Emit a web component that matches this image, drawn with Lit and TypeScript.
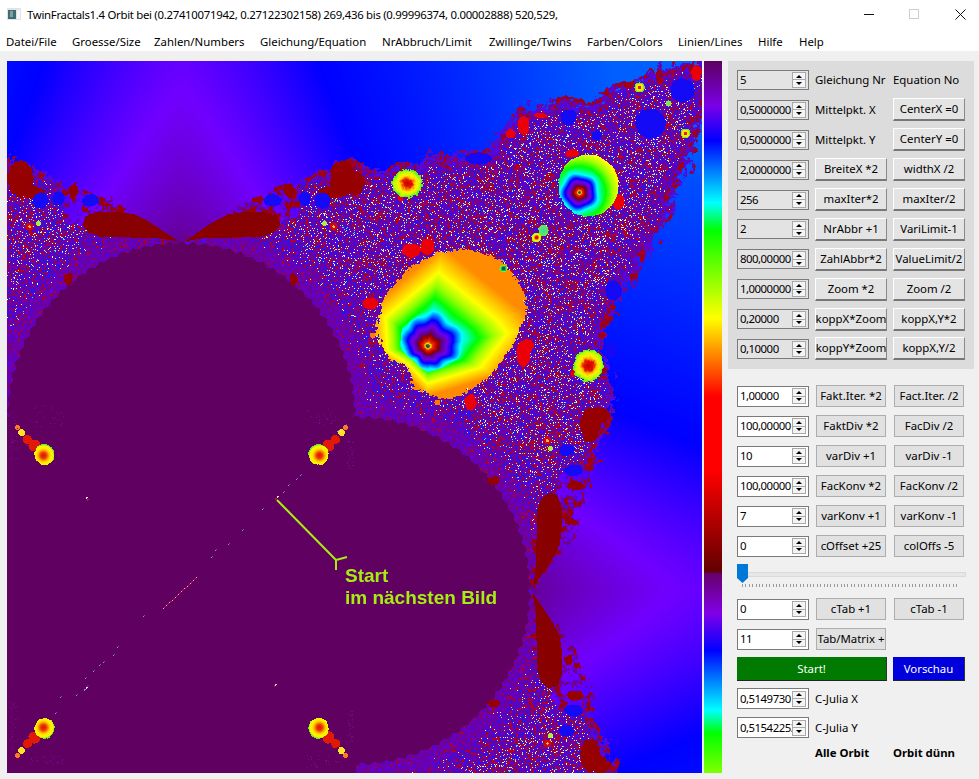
import { LitElement, html, css } from "lit";
import { customElement } from "lit/decorators.js";

type P = [number, number];
type C = [number, number, number];

const hash = (x: number, y: number, s = 0) => {
  let h = Math.imul(x | 0, 374761393) + Math.imul(y | 0, 668265263) + Math.imul(s, 1274126177);
  h = Math.imul(h ^ (h >>> 13), 1274126177);
  return ((h ^ (h >>> 16)) >>> 0) / 4294967296;
};
const vnoise = (x: number, y: number, s = 0) => {
  const xi = Math.floor(x), yi = Math.floor(y);
  const fx = x - xi, fy = y - yi;
  const ux = fx * fx * (3 - 2 * fx), uy = fy * fy * (3 - 2 * fy);
  const a = hash(xi, yi, s), b = hash(xi + 1, yi, s), c = hash(xi, yi + 1, s), d = hash(xi + 1, yi + 1, s);
  return a + (b - a) * ux + (c - a) * uy + (a - b - c + d) * ux * uy;
};
const fbm = (x: number, y: number, s = 0) =>
  0.5 * vnoise(x, y, s) + 0.3 * vnoise(x * 2.1, y * 2.1, s + 1) + 0.2 * vnoise(x * 4.3, y * 4.3, s + 2);
const clamp = (v: number, a = 0, b = 1) => Math.min(b, Math.max(a, v));
const mix = (a: C, b: C, t: number): C => [a[0] + (b[0] - a[0]) * t, a[1] + (b[1] - a[1]) * t, a[2] + (b[2] - a[2]) * t];
const ramp = (stops: [number, C][], t: number): C => {
  if (t <= stops[0][0]) return stops[0][1];
  for (let i = 1; i < stops.length; i++) {
    if (t <= stops[i][0]) return mix(stops[i - 1][1], stops[i][1], (t - stops[i - 1][0]) / (stops[i][0] - stops[i - 1][0] || 1));
  }
  return stops[stops.length - 1][1];
};
const inPoly = (poly: P[], x: number, y: number) => {
  let c = false;
  for (let i = 0, j = poly.length - 1; i < poly.length; j = i++) {
    const [xi, yi] = poly[i], [xj, yj] = poly[j];
    if (yi > y !== yj > y && x < ((xj - xi) * (y - yi)) / (yj - yi) + xi) c = !c;
  }
  return c;
};
const polyDist = (poly: P[], x: number, y: number, upTo: number) => {
  let best = upTo * upTo;
  for (let i = 0, j = poly.length - 1; i < poly.length; j = i++) {
    const [ax, ay] = poly[j], [bx, by] = poly[i];
    const dx = bx - ax, dy = by - ay;
    const t = clamp(((x - ax) * dx + (y - ay) * dy) / (dx * dx + dy * dy || 1));
    const ex = x - ax - t * dx, ey = y - ay - t * dy;
    const d = ex * ex + ey * ey;
    if (d < best) best = d;
  }
  return Math.sqrt(best);
};

const BG: [number, C][] = [[0, [96, 0, 96]], [0.5, [112, 0, 255]], [1, [0, 0, 255]], [1.5, [0, 96, 255]]];
const RINGS: [number, C][] = [
  [0, [40, 90, 50]], [0.025, [40, 90, 50]], [0.045, [250, 225, 0]], [0.07, [235, 50, 0]], [0.12, [195, 0, 0]],
  [0.17, [110, 0, 0]], [0.171, [96, 0, 96]], [0.27, [112, 0, 230]], [0.35, [0, 0, 255]], [0.47, [0, 255, 255]],
  [0.65, [0, 255, 0]], [0.82, [150, 255, 0]], [1, [255, 255, 0]], [1.35, [255, 140, 0]],
];
const HOT: [number, C][] = [
  [0, [205, 0, 0]], [0.3, [225, 20, 0]], [0.48, [255, 170, 0]], [0.62, [255, 240, 0]], [0.85, [190, 255, 0]], [1, [80, 235, 50]],
];
const CORNER: [number, C][] = [
  [0, [220, 20, 0]], [0.28, [235, 60, 0]], [0.55, [255, 190, 0]], [0.72, [255, 240, 0]], [0.94, [245, 245, 0]], [1, [120, 230, 40]],
];
const OUTLINE: P[] = [
  [180, 243], [150, 225], [120, 205], [85, 190], [60, 178], [37, 170], [20, 163], [7, 157], [-9, 157], [-9, 790],
  [622, 790], [617, 767], [597, 723], [590, 693], [573, 647], [547, 607], [532, 590], [547, 573], [573, 533], [590, 487],
  [597, 457], [617, 413], [613, 377], [600, 350], [617, 310], [627, 290], [650, 253], [665, 225], [682, 190], [694, 155],
  [708, 110], [716, 54], [680, 62], [663, 67], [640, 73], [617, 82], [605, 90], [593, 102], [560, 98], [540, 100],
  [517, 107], [500, 130], [483, 148], [460, 150], [430, 155], [403, 162], [385, 166], [360, 160], [345, 160], [323, 168],
  [300, 176], [275, 188], [240, 203], [210, 225],
];
const BLOB: P[] = [
  [467, 247], [500, 260], [520, 283], [527, 307], [520, 330], [507, 353], [487, 377], [457, 397], [440, 398], [413, 387],
  [407, 367], [387, 357], [375, 330], [383, 297], [410, 267], [437, 252],
];
const YELLOW: P[] = [[438, 272], [497, 320], [507, 333], [480, 367], [427, 383], [407, 363], [387, 350], [385, 317]];
const LENS: P[] = [
  [82, 224], [85, 216], [95, 212], [115, 211], [135, 214], [150, 222], [165, 232], [178, 241], [160, 238], [130, 237], [100, 236], [88, 232],
];

function paintFractal(canvas: HTMLCanvasElement) {
  const W = 695, H = 712, OX = 7, OY = 61;
  canvas.width = W;
  canvas.height = H;
  const ctx = canvas.getContext("2d")!;
  const img = ctx.createImageData(W, H);
  const d = img.data;
  const put = (x: number, y: number, c: C) => {
    const px = Math.round(x) - OX, py = Math.round(y) - OY;
    if (px < 0 || py < 0 || px >= W || py >= H) return;
    const i = (py * W + px) * 4;
    d[i] = c[0]; d[i + 1] = c[1]; d[i + 2] = c[2]; d[i + 3] = 255;
  };

  const bg = (x: number, y: number): C => {
    const a = Math.abs(x - 181) / 170, r = clamp((241 - y) / 180);
    const t1 = 0.15 + 0.4 * Math.pow(r, 0.7) + 0.6 * Math.pow(a, 1.35);
    const s = clamp((x - 530) / 170), b = Math.abs(y - 590) / 180;
    const t2 = 0.15 + 0.4 * Math.pow(s, 0.7) + 0.6 * Math.pow(b, 1.35);
    let t = Math.min(t1, t2);
    if (t > 1) t = 1 + (t - 1) * 0.3;
    return ramp(BG, t);
  };

  const m1 = (p: P): P => [362 - p[0], p[1]];
  const rot = (p: P): P => [532 - (p[1] - 241), 588 + (p[0] - 178)];
  const m2 = (p: P): P => [p[0], 1180 - p[1]];
  const lenses: P[][] = [LENS, LENS.map(m1), LENS.map(rot), LENS.map(rot).map(m2)];

  for (let y = OY; y < OY + H; y++) {
    for (let x = OX; x < OX + W; x++) {
      const dA = Math.hypot(x - 181, y - 416), dB = Math.hypot(x - 356, y - 590);
      const angA = Math.atan2(y - 416, x - 181), angB = Math.atan2(y - 590, x - 356);
      const tri = (v: number) => Math.abs(((v % 1) + 1) % 1 - 0.5) * 2;
      const ea = dA - 175 + 3 * tri((angA * 90) / 6.2832);
      const eb = dB - 175 + 3 * tri((angB * 90) / 6.2832);
      if (ea < 0 || eb < 0 || (x < 356 && y > 416 && (y > 590 || x < 181 || dB < 178 || x < 300))) {
        put(x, y, [96, 0, 96]);
        continue;
      }
      const wx = x + (fbm(x / 11, y / 11, 5) - 0.5) * 20;
      const wy = y + (fbm(x / 11, y / 11, 9) - 0.5) * 20;
      if (!inPoly(OUTLINE, wx, wy)) {
        put(x, y, bg(x, y));
        continue;
      }
      const edge = polyDist(OUTLINE, wx, wy, 40);
      const dc = Math.min(ea, eb);
      const h = hash(x, y, 11);
      const h2 = hash(Math.floor(x / 1.5), Math.floor(y / 1.5), 23);
      const lump = fbm(x / 6, y / 6, 31);
      const n = fbm(x / 6, y / 6, 41);
      // lace above and beside the lenses near the two cusps
      const arcTop = y < 238 && x > 62 && x < 300;
      const arcRight = x > 530 && x < 600 && y > 470 && y < 710;
      if ((arcTop || arcRight) && edge < 34) {
        if (n < 0.47) put(x, y, bg(x, y));
        else if (n > 0.6) put(x, y, [155, 0, 10]);
        else put(x, y, h2 < 0.6 ? [85, 0, 225] : [130, 0, 110]);
        continue;
      }
      if (edge < 10) {
        if (edge < 5 && n < 0.42) put(x, y, bg(x, y));
        else if (n > 0.58) put(x, y, h2 < 0.9 ? [165, 0, 15] : [110, 0, 120]);
        else put(x, y, h2 < 0.7 ? [75, 10, 230] : [125, 0, 125]);
        continue;
      }
      const f = clamp((dc - 8) / 45) * clamp((edge - 8) / 15);
      let c: C;
      if (h < 0.05 * f) c = [255, 255, 245];
      else if (h < 0.072 * f) c = [90, 225, 240];
      else if (h < 0.082 * f) c = [180, 240, 100];
      else if (h < 0.088 * f) c = [255, 220, 60];
      else {
        const red = clamp((lump - 0.33) * 2.6) * (0.3 + 0.7 * f);
        if (h2 < 0.62 * red) c = h2 < 0.34 * red ? [180, 0, 25] : [150, 0, 70];
        else if (h2 < 0.62 * red + 0.28) c = [88, 0, 210];
        else if (h2 < 0.62 * red + 0.5) c = f > 0.2 ? [40, 20, 235] : [100, 0, 190];
        else c = [115, 0, 150];
      }
      put(x, y, c);
    }
  }

  const ellipse = (cx: number, cy: number, rx: number, ry: number, col: (x: number, y: number, u: number) => C, jag = 2.5) => {
    const R = Math.max(rx, ry) + jag + 2;
    for (let y = Math.floor(cy - R); y <= cy + R; y++) {
      for (let x = Math.floor(cx - R); x <= cx + R; x++) {
        const u = Math.hypot((x - cx) / rx, (y - cy) / ry);
        const w = ((fbm(x / 3, y / 3, 71) - 0.5) * 2 * jag) / Math.max(rx, ry);
        if (u + w <= 1) put(x, y, col(x, y, clamp(u + w)));
      }
    }
  };
  const flat = (c: C) => () => c;

  for (const l of lenses) {
    const xs = l.map((p) => p[0]), ys = l.map((p) => p[1]);
    for (let y = Math.min(...ys); y <= Math.max(...ys); y++)
      for (let x = Math.min(...xs); x <= Math.max(...xs); x++) if (inPoly(l, x, y)) put(x, y, [136, 0, 0]);
  }

  const DARK: C = [150, 0, 0];
  const dark: number[][] = [
    [20, 178, 13, 18], [32, 192, 12, 6], [342, 178, 13, 18], [330, 192, 12, 6], [73, 190, 5, 7], [289, 190, 5, 7],
    [68, 278, 4, 6], [293, 278, 4, 6], [493, 480, 6, 4], [493, 703, 6, 4], [590, 425, 10, 17], [600, 415, 10, 8], [575, 485, 8, 5],
    [590, 755, 10, 17], [600, 765, 10, 8], [575, 695, 8, 5], [355, 182, 9, 12], [568, 520, 4, 5], [568, 660, 4, 5],
  ];
  for (const [a, b, c, e] of dark) ellipse(a, b, c, e, flat(DARK), 3);

  const BLUE: C = [20, 10, 245];
  const blue: number[][] = [
    [650, 123, 15, 15], [682, 90, 12, 12], [568, 117, 8, 8], [478, 158, 13, 6], [613, 290, 8, 10], [40, 200, 8, 8], [58, 198, 6, 7],
    [90, 200, 9, 6], [322, 200, 8, 8], [304, 198, 6, 7], [272, 200, 9, 6], [566, 450, 8, 6], [573, 470, 9, 6], [566, 730, 8, 6], [573, 710, 9, 6],
    [610, 350, 6, 8], [596, 135, 5, 5],
  ];
  for (const [a, b, c, e] of blue) ellipse(a, b, c, e, flat(BLUE), 1.5);

  const RED: C = [235, 0, 10];
  const reds: number[][] = [
    [411, 250, 9, 7], [427, 246, 7, 8], [370, 303, 8, 6], [470, 402, 6, 8], [523, 353, 7, 13], [527, 345, 6, 6], [618, 201, 6, 8], [572, 153, 7, 4],
    [523, 125, 6, 9], [540, 115, 6, 3], [510, 133, 5, 5], [573, 373, 3, 3], [400, 198, 3, 3], [696, 72, 5, 8],
  ];
  for (const [a, b, c, e] of reds) ellipse(a, b, c, e, flat(RED), 1.5);
  ellipse(437, 402, 3, 3, flat([255, 120, 0]), 0.5);
  ellipse(372, 335, 3, 3, flat([255, 120, 0]), 0.5);

  const cx = 427, cy = 346;
  const rayR = (poly: P[], ang: number) => {
    const dx = Math.cos(ang), dy = Math.sin(ang);
    let best = 1e9;
    for (let i = 0, j = poly.length - 1; i < poly.length; j = i++) {
      const [ax, ay] = poly[j], [bx, by] = poly[i];
      const ex = bx - ax, ey = by - ay;
      const den = dx * ey - dy * ex;
      if (Math.abs(den) < 1e-9) continue;
      const t = ((ax - cx) * ey - (ay - cy) * ex) / den;
      const s = ((ax - cx) * dy - (ay - cy) * dx) / den;
      if (t > 0 && s >= 0 && s <= 1 && t < best) best = t;
    }
    return best;
  };
  for (let y = 240; y < 405; y++) {
    for (let x = 368; x < 532; x++) {
      const sx = x + (hash(Math.floor(x / 3), Math.floor(y / 3), 3) - 0.5) * 4;
      const sy = y + (hash(Math.floor(x / 3), Math.floor(y / 3), 4) - 0.5) * 4;
      if (!inPoly(BLOB, sx, sy)) continue;
      const ang = Math.atan2(y - cy, x - cx);
      const r = Math.hypot(x - cx, y - cy);
      let u = Math.min(r / 75, 0.5) * 0.55 + (r / rayR(YELLOW, ang)) * 0.45;
      if (u > 0.5) u = r / rayR(YELLOW, ang);
      if (u < 0.7) u *= 1 + 0.06 * Math.cos(8 * ang + 0.6) * clamp((0.7 - u) / 0.25);
      put(x, y, ramp(RINGS, u));
    }
  }
  ellipse(503, 268, 4, 4, (x, y, u) => (u < 0.4 ? [10, 90, 70] : u < 0.7 ? [0, 190, 120] : [120, 240, 20]), 0.5);

  ellipse(588, 185, 30, 31, (x, y) => {
    const ang = Math.atan2(y - 192, x - 579);
    const r = Math.hypot(x - 579, y - 192);
    let u = r / 40;
    if (u < 0.6) u *= 1 + 0.05 * Math.cos(5 * ang + 0.5);
    return ramp(RINGS, u);
  }, 1.2);

  const hot = (x: number, y: number, u: number) => ramp(HOT, u);
  ellipse(407, 183, 15, 14, hot, 2.5);
  ellipse(588, 365, 15, 16, hot, 2.5);
  ellipse(543, 230, 5, 6, (x, y, u) => ramp([[0, [100, 240, 60]], [1, [60, 210, 190]]], 1 - u), 0.5);
  ellipse(536, 237, 5, 5, hot, 0.4);

  const ringDot = (x0: number, y0: number, r: number) =>
    ellipse(x0, y0, r, r, (x, y, u) => (u < 0.3 ? [220, 40, 0] : u < 0.75 ? [255, 230, 0] : [120, 230, 40]), 0.4);
  ringDot(639, 87, 5); ringDot(685, 133, 5);
  ellipse(668, 103, 3, 3, flat([140, 230, 70]), 0.3);
  const redDot = (x0: number, y0: number) =>
    ellipse(x0, y0, 4, 4, (x, y, u) => (u < 0.35 ? [255, 170, 90] : [205, 10, 10]), 0.3);
  const limeDot = (x0: number, y0: number) => ellipse(x0, y0, 2.4, 2.4, flat([170, 240, 60]), 0.2);
  redDot(29, 226); redDot(333, 226); redDot(547, 440); redDot(547, 743);
  limeDot(38, 223); limeDot(324, 223); limeDot(550, 448); limeDot(550, 735);

  const corner = (x0: number, y0: number, sx: number, sy: number) => {
    const parts: [number, number, number, C][] = [
      [-27, -27, 2.5, [255, 120, 30]], [-23, -22, 3.5, [255, 225, 40]], [-17, -15, 4.5, [225, 25, 0]], [-10, -9, 6, [225, 25, 10]],
    ];
    for (const [a, b, r, c] of parts) ellipse(x0 + a * sx, y0 + b * sy, r, r, flat(c), 0.4);
    ellipse(x0, y0, 10, 10.5, (x, y) => ramp(CORNER, Math.hypot(x - x0 + 1 * sx, y - y0 - 1 * sy) / 10.5), 1.2);
  };
  corner(44, 454, 1, 1);
  corner(318, 454, -1, 1);
  corner(44, 728, 1, -1);
  corner(318, 728, -1, -1);

  const speck = (x: number, y: number, c: C) => put(x, y, c);
  const diag = [
    [345, 425], [337, 431], [300, 475], [296, 479], [288, 485], [283, 492], [262, 509], [242, 530], [228, 544], [215, 550], [211, 557], [143, 616],
    [117, 647], [113, 655], [103, 662], [99, 665], [93, 671], [85, 678], [76, 695], [60, 697], [55, 713],
  ];
  for (const [x, y] of diag) { speck(x, y, [120, 150, 235]); speck(x + 1, y - 1, [90, 80, 220]); }
  for (let i = 0; i < 34; i++) speck(163 + i, 610 - i * 0.93 - 2, i % 3 ? [190, 20, 90] : [240, 190, 130]);
  for (const [x, y, c] of [
    [275, 498, [210, 20, 60]], [277, 496, [255, 220, 220]], [87, 499, [200, 20, 60]], [86, 497, [255, 240, 240]], [274, 685, [210, 20, 60]], [275, 684, [240, 190, 190]],
    [86, 687, [235, 235, 235]], [84, 689, [130, 130, 230]], [87, 685, [120, 20, 160]],
  ] as [number, number, C][]) {
    speck(x, y, c); speck(x + 1, y, c); speck(x, y + 1, c);
  }
  const dustBoxes = [
    [33, 405, 30, 22], [305, 408, 30, 16], [347, 440, 6, 33], [30, 755, 33, 8], [305, 755, 35, 13], [347, 710, 6, 35], [9, 410, 8, 50], [9, 700, 8, 50],
  ];
  dustBoxes.forEach(([bx, by, bw, bh], k) => {
    for (let i = 0; i < 28; i++) speck(bx + hash(i, 1, 81 + k) * bw, by + hash(i, 2, 81 + k) * bh, [118, 10, 140]);
  });

  ctx.putImageData(img, 0, 0);
  ctx.filter = "blur(0.45px)";
  ctx.drawImage(canvas, 0, 0);
  ctx.filter = "none";
}

const UPPER: [string, string, string, boolean?, boolean?][] = [
  ["5", "Gleichung Nr", "Equation No", true, true],
  ["0,5000000", "Mittelpkt. X", "CenterX =0", true],
  ["0,5000000", "Mittelpkt. Y", "CenterY =0", true],
  ["2,0000000", "BreiteX *2", "widthX /2"],
  ["256", "maxIter*2", "maxIter/2"],
  ["2", "NrAbbr +1", "VariLimit-1"],
  ["800,00000", "ZahlAbbr*2", "ValueLimit/2"],
  ["1,0000000", "Zoom *2", "Zoom /2"],
  ["0,20000", "koppX*Zoom", "koppX,Y*2"],
  ["0,10000", "koppY*Zoom", "koppX,Y/2"],
];
const LOWER: [string, string, string][] = [
  ["1,00000", "Fakt.Iter. *2", "Fact.Iter. /2"],
  ["100,00000", "FaktDiv *2", "FacDiv /2"],
  ["10", "varDiv +1", "varDiv -1"],
  ["100,00000", "FacKonv *2", "FacKonv /2"],
  ["7", "varKonv +1", "varKonv -1"],
  ["0", "cOffset +25", "colOffs -5"],
];
const MENU: [string, number][] = [
  ["Datei/File", 66], ["Groesse/Size", 82], ["Zahlen/Numbers", 106], ["Gleichung/Equation", 122], ["NrAbbruch/Limit", 107],
  ["Zwillinge/Twins", 98], ["Farben/Colors", 91], ["Linien/Lines", 80], ["Hilfe", 41], ["Help", 40],
];

@customElement("app-root")
export class AppRoot extends LitElement {
  static styles = css`
    :host {
      display: block;
      width: 979px;
      height: 779px;
      overflow: hidden;
      background: #f0f0f0;
      color: #000;
      font-family: "Noto Sans", "Open Sans", sans-serif;
      font-size: 11.4px;
    }
    .title {
      box-sizing: border-box;
      height: 30px;
      background: #fff;
      display: flex;
      align-items: center;
      padding: 0 0 2px 7px;
      letter-spacing: -0.3px;
      white-space: nowrap;
    }
    .title svg.app { margin-right: 6px; }
    .title .controls { margin-left: auto; }
    .controls svg { display: block; margin-top: 2px; }
    .menu {
      box-sizing: border-box;
      height: 21px;
      background: #fff;
      display: flex;
      align-items: center;
      padding: 2px 0 0 6px;
      white-space: nowrap;
    }
    .menu span { display: block; flex: none; }
    .main { display: flex; padding: 10px 0 0 7px; }
    .view { position: relative; width: 695px; height: 712px; flex: none; }
    canvas { display: block; width: 695px; height: 712px; }
    .mark { position: absolute; left: 0; top: 0; }
    .note {
      position: absolute;
      left: 338px;
      top: 504px;
      font-family: "Liberation Sans", Arial, sans-serif;
      font-weight: 700;
      font-size: 19px;
      line-height: 22px;
      color: #a6ee10;
      white-space: nowrap;
    }
    .strip {
      flex: none;
      width: 18px;
      height: 712px;
      margin-left: 2px;
      background: linear-gradient(
        #5e0060 0%, #7a00e8 6.3%, #0000ff 11.2%, #00ffff 19.9%, #00ff00 23.8%, #ffff00 36.1%, #ff0000 47.1%,
        #ff0000 57.5%, #600000 71.8%, #660066 71.9%, #8000e8 77.6%, #0000ff 82.8%, #00ffff 91.2%, #00ff00 94.4%, #80ff00 100%
      );
    }
    .side { flex: none; width: 246px; margin-left: 6px; }
    .panel { background: #dcdcdc; padding: 4px 9px 0; height: 308px; box-sizing: border-box; }
    .panel .row { height: 29.9px; }
    .lower { padding: 12px 9px 0; }
    .row {
      display: grid;
      grid-template-columns: 72px 72px 72px;
      column-gap: 6px;
      height: 30px;
      align-items: center;
    }
    .lower .row.tight { height: 29px; }
    .spin {
      box-sizing: border-box;
      height: 20px;
      border: 1px solid #7a7a7a;
      display: flex;
      align-items: center;
      padding: 0 2px;
      overflow: hidden;
      background: #e3e3e3;
    }
    .lower .spin { background: #fff; height: 21px; }
    .val {
      flex: 1;
      min-width: 0;
      overflow: hidden;
      white-space: nowrap;
      letter-spacing: -0.5px;
      padding-bottom: 1px;
    }
    .arrows {
      flex: none;
      width: 14px;
      height: 16px;
      border: 1px solid #a9a9a9;
      box-sizing: border-box;
      background: #f4f4f4;
      display: flex;
      flex-direction: column;
    }
    .arrows i { flex: 1; display: flex; align-items: center; justify-content: center; }
    .arrows i + i { border-top: 1px solid #a9a9a9; }
    .arrows i::before {
      content: "";
      width: 0;
      height: 0;
      border-left: 3.5px solid transparent;
      border-right: 3.5px solid transparent;
    }
    .arrows i.up::before { border-bottom: 3px solid #000; }
    .arrows i.down::before { border-top: 3px solid #000; }
    .lbl { white-space: nowrap; padding-bottom: 1px; }
    .btn {
      box-sizing: border-box;
      height: 23px;
      display: flex;
      align-items: center;
      justify-content: center;
      white-space: nowrap;
      overflow: hidden;
      background: #e4e4e4;
      padding-bottom: 1px;
      border-top: 1px solid #fff;
      border-left: 1px solid #fff;
      border-right: 1px solid #8a8a8a;
      border-bottom: 2px solid #777;
    }
    .flat {
      box-sizing: border-box;
      height: 22px;
      margin: 0 1px;
      padding-bottom: 1px;
      display: flex;
      align-items: center;
      justify-content: center;
      white-space: nowrap;
      overflow: hidden;
      background: #e1e1e1;
      border: 1px solid #adadad;
    }
    .slider { height: 33px; position: relative; margin-right: -1px; }
    .groove {
      position: absolute;
      left: 1px;
      right: 0;
      top: 11px;
      height: 3px;
      background: #e7e7e7;
      border: 1px solid #dadada;
    }
    .thumb { position: absolute; left: 0; top: 3px; display: block; }
    .ticks {
      position: absolute;
      left: 5px;
      width: 217px;
      top: 23px;
      height: 3px;
      background: repeating-linear-gradient(90deg, #9a9a9a 0 1px, transparent 1px 3.4px);
    }
    .act {
      box-sizing: border-box;
      height: 24px;
      display: flex;
      align-items: center;
      justify-content: center;
      color: #fff;
      padding-bottom: 1px;
      border-bottom: 1px solid #222;
      border-right: 1px solid #333;
    }
    .act.go { grid-column: span 2; background: #007a00; }
    .act.pre { background: #0000dc; }
    .strong { font-weight: 700; white-space: nowrap; }
    .lower .row.last { height: 20px; }
    .span2 { grid-column: span 2; }
  `;

  firstUpdated() {
    paintFractal(this.renderRoot.querySelector("canvas") as HTMLCanvasElement);
  }

  private spin(v: string) {
    return html`<div class="spin"><span class="val">${v}</span><span class="arrows"><i class="up"></i><i class="down"></i></span></div>`;
  }

  render() {
    return html`
      <div class="title">
        <svg class="app" width="14" height="12" viewBox="0 0 14 12">
          <rect width="14" height="12" fill="#dfe5e6" />
          <rect x="1" y="2" width="8" height="9" fill="#3f6d73" />
          <rect x="3" y="3" width="3" height="6" fill="#7fa0a4" />
          <rect x="10" y="2" width="3" height="9" fill="#f7f7f7" />
        </svg>
        <span>TwinFractals1.4 Orbit bei (0.27410071942, 0.27122302158) 269,436 bis (0.99996374, 0.00002888) 520,529,</span>
        <div class="controls">
          <svg width="124" height="30" viewBox="0 0 124 30">
            <path d="M9 14.5h10" stroke="#111" stroke-width="1" fill="none" />
            <rect x="54.5" y="9.5" width="9" height="9" fill="none" stroke="#cfcfcf" />
            <path d="M100.5 9.5l10 10M110.5 9.5l-10 10" stroke="#111" stroke-width="1" fill="none" />
          </svg>
        </div>
      </div>
      <div class="menu">${MENU.map(([m, w]) => html`<span style="width:${w}px">${m}</span>`)}</div>
      <div class="main">
        <div class="view">
          <canvas width="695" height="712"></canvas>
          <svg class="mark" width="695" height="712" viewBox="0 0 695 712">
            <path d="M270 439L329 499M329 509V499L340 496" fill="none" stroke="#a6ee10" stroke-width="2" />
          </svg>
          <div class="note">Start<br />im nächsten Bild</div>
        </div>
        <div class="strip"></div>
        <div class="side">
          <div class="panel">
            ${UPPER.map(
              ([v, a, b, la, lb]) => html`<div class="row">
                ${this.spin(v)}
                ${la ? html`<span class="lbl">${a}</span>` : html`<div class="btn">${a}</div>`}
                ${lb ? html`<span class="lbl">${b}</span>` : html`<div class="btn">${b}</div>`}
              </div>`
            )}
          </div>
          <div class="lower">
            ${LOWER.map(
              ([v, a, b]) => html`<div class="row">
                ${this.spin(v)}
                <div class="flat">${a}</div>
                <div class="flat">${b}</div>
              </div>`
            )}
            <div class="slider">
              <div class="groove"></div>
              <svg class="thumb" width="11" height="19" viewBox="0 0 11 19"><path d="M0 0h11v14l-5.5 5L0 14z" fill="#0078d7" /></svg>
              <div class="ticks"></div>
            </div>
            <div class="row">${this.spin("0")}<div class="flat">cTab +1</div><div class="flat">cTab -1</div></div>
            <div class="row">${this.spin("11")}<div class="flat">Tab/Matrix +</div></div>
            <div class="row"><div class="act go">Start!</div><div class="act pre">Vorschau</div></div>
            <div class="row tight">${this.spin("0,5149730")}<span class="lbl span2">C-Julia X</span></div>
            <div class="row tight">${this.spin("0,51542253")}<span class="lbl span2">C-Julia Y</span></div>
            <div class="row last"><span></span><span class="strong">Alle Orbit</span><span class="strong">Orbit dünn</span></div>
          </div>
        </div>
      </div>
    `;
  }
}
